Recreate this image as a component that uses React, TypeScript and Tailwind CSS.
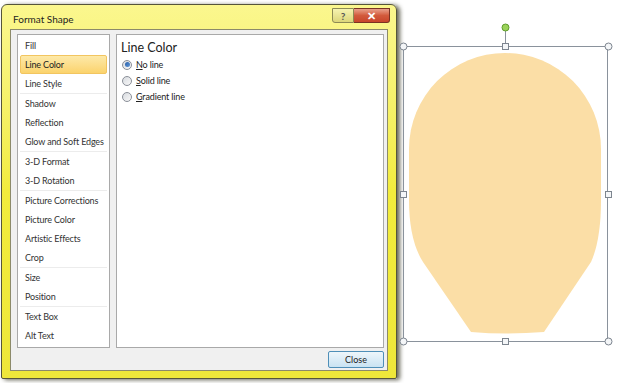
const groups = [
  ["Fill", "Line Color", "Line Style"],
  ["Shadow", "Reflection", "Glow and Soft Edges"],
  ["3-D Format", "3-D Rotation"],
  ["Picture Corrections", "Picture Color", "Artistic Effects", "Crop"],
  ["Size", "Position"],
  ["Text Box", "Alt Text"],
]

const options = [
  { key: "N", rest: "o line", checked: true },
  { key: "S", rest: "olid line", checked: false },
  { key: "G", rest: "radient line", checked: false },
]

function Radio({ checked }: { checked: boolean }) {
  return (
    <span className="flex h-[10px] w-[10px] items-center justify-center rounded-full border border-[#8a8f98] bg-gradient-to-br from-[#d8dbe0] to-[#f8f8f8]">
      {checked && (
        <span className="h-[5px] w-[5px] rounded-full bg-gradient-to-br from-[#2a5fa8] to-[#5f98d8]" />
      )}
    </span>
  )
}

function Shape() {
  const corner = [
    [404, 46],
    [609, 46],
    [404, 341],
    [609, 341],
  ]
  const mids = [
    [506, 46],
    [506, 341],
    [404, 194],
    [609, 194],
  ]
  return (
    <svg width="222" height="383" viewBox="398 0 222 383">
      <path
        d="M 506 53 A 96 96 0 0 1 602 149 L 602 200 Q 602 240 592 262 L 545 332 Q 508 335 472 332 L 424 262 Q 410 240 410 200 L 410 149 A 96 96 0 0 1 506 53 Z"
        fill="#fbdea6"
      />
      <rect x="404.5" y="46.5" width="204" height="295" fill="none" stroke="#8a929c" strokeWidth="1" />
      <line x1="506.5" y1="31" x2="506.5" y2="43" stroke="#8a929c" />
      <circle cx="506.5" cy="27.5" r="3.5" fill="#9bd35a" stroke="#5f9c2c" />
      {corner.map(([x, y], i) => (
        <circle key={i} cx={x + 0.5} cy={y + 0.5} r="3.5" fill="#f4f6f8" stroke="#7d858f" />
      ))}
      {mids.map(([x, y], i) => (
        <rect key={i} x={x - 2.5} y={y - 2.5} width="6" height="6" fill="#f4f6f8" stroke="#7d858f" />
      ))}
    </svg>
  )
}

export default function App() {
  return (
    <div className="flex h-[383px] w-[620px] overflow-hidden bg-white font-['Lato','Liberation_Sans',sans-serif] text-[#222]">
      <div className="ml-px mt-[4px] flex h-[375px] w-[396px] shrink-0 flex-col rounded-t-[6px] rounded-b-[2px] border border-[#55553a] bg-gradient-to-b from-[#fbf78e] via-[#f2ec3c] to-[#eee73a] shadow-[3px_1px_4px_rgba(40,40,20,0.7)]">
        <div className="flex h-[24px] items-start justify-between pl-[11px] pr-[6px]">
          <span className="mt-[7px] text-[10px] leading-[14px] text-[#1e1e1e]">Format Shape</span>
          <div className="mt-[3px] flex">
            <div className="flex h-[15px] w-[22px] items-center justify-center rounded-bl-[3px] border border-[#8d8a55] bg-gradient-to-b from-[#f6f3b0] to-[#dcd67a] text-[10px] font-bold leading-none text-[#555]">
              ?
            </div>
            <div className="flex h-[15px] w-[36px] items-center justify-center rounded-br-[3px] border border-l-0 border-[#7a3322] bg-gradient-to-b from-[#e8a08a] via-[#d25a3c] to-[#c8452a] text-[11px] font-bold leading-none text-white">
              ✕
            </div>
          </div>
        </div>
        <div className="mx-[8px] flex flex-1 flex-col border border-[#8c8a6a] bg-[#f0f0f0] pl-[6px] pr-[3px] pt-[4px]">
          <div className="flex h-[314px] gap-[6px]">
            <div className="flex w-[93px] flex-col border border-[#a9a9a9] bg-white px-[2px] pt-[0.5px] text-[9px] leading-none tracking-[-0.15px]">
              {groups.map((group, gi) => (
                <div key={gi} className={gi < groups.length - 1 ? "border-b border-[#ececec]" : ""}>
                  {group.map((item) => (
                    <div
                      key={item}
                      className={
                        item === "Line Color"
                          ? "flex h-[19px] items-center whitespace-nowrap rounded-[2px] border border-[#f2c560] bg-gradient-to-b from-[#fde9a8] to-[#fbd36c] pl-[4px]"
                          : "flex h-[19px] items-center whitespace-nowrap pl-[5px] text-[#333]"
                      }
                    >
                      {item}
                    </div>
                  ))}
                </div>
              ))}
            </div>
            <div className="flex flex-1 flex-col border border-[#a9a9a9] bg-white pl-[4px] pt-[4px]">
              <div className="text-[12.5px] leading-[18px] text-[#222]">Line Color</div>
              <div className="mt-[2px] flex flex-col gap-[5px] pl-[1px]">
                {options.map((o) => (
                  <div key={o.key} className="flex h-[11px] items-center gap-[4px] text-[9px] leading-none tracking-[-0.15px]">
                    <Radio checked={o.checked} />
                    <span>
                      <span className="underline">{o.key}</span>
                      {o.rest}
                    </span>
                  </div>
                ))}
              </div>
            </div>
          </div>
          <div className="flex flex-1 items-center justify-end">
            <div className="flex h-[17px] w-[56px] items-center justify-center rounded-[2px] border border-[#4f8fb8] bg-gradient-to-b from-[#eef6fb] to-[#c9e3f2] text-[9px] leading-none text-[#222]">
              Close
            </div>
          </div>
        </div>
        <div className="h-[7px]" />
      </div>
      <Shape />
    </div>
  )
}
